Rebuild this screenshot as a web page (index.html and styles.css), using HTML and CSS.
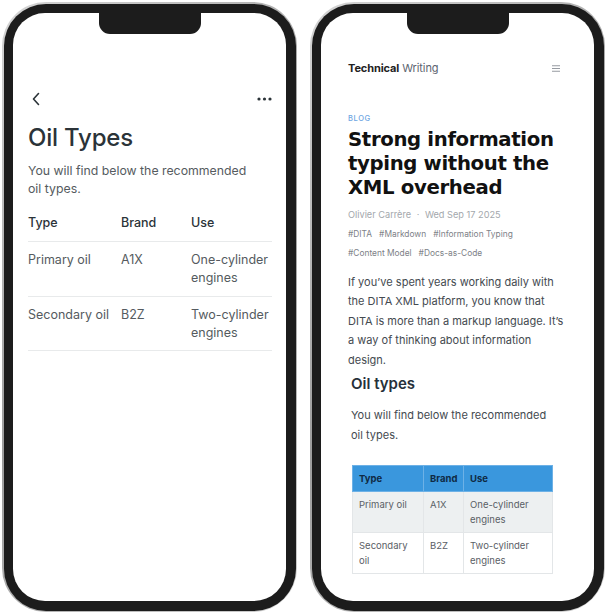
FILE: index.html
```html
<!DOCTYPE html>
<html lang="en">
<head>
<meta charset="utf-8">
<title>Oil Types</title>
<link rel="stylesheet" href="styles.css">
</head>
<body>
<div class="phone">
  <div class="frame">
    <div class="screen app">
      <div class="notch"></div>
      <div class="nav">
        <svg class="back" width="10" height="14" viewBox="0 0 10 14"><path d="M6.5 1.5 L1.5 7 L6.5 12.5" fill="none" stroke="#2b3338" stroke-width="1.6" stroke-linecap="round" stroke-linejoin="round"/></svg>
        <svg class="more" width="15" height="4" viewBox="0 0 15 4"><circle cx="2" cy="2" r="1.6" fill="#2b3338"/><circle cx="7.5" cy="2" r="1.6" fill="#2b3338"/><circle cx="13" cy="2" r="1.6" fill="#2b3338"/></svg>
      </div>
      <h1 class="app-title">Oil Types</h1>
      <p class="app-intro">You will find below the recommended oil types.</p>
      <table class="app-table">
        <thead>
          <tr><th class="c1">Type</th><th class="c2">Brand</th><th class="c3">Use</th></tr>
        </thead>
        <tbody>
          <tr><td>Primary oil</td><td>A1X</td><td>One-cylinder engines</td></tr>
          <tr><td>Secondary oil</td><td>B2Z</td><td>Two-cylinder engines</td></tr>
        </tbody>
      </table>
    </div>
  </div>
</div>
<div class="phone">
  <div class="frame">
    <div class="screen blog">
      <div class="notch"></div>
      <header class="site-head">
        <div class="brand"><strong>Technical</strong> Writing</div>
        <svg class="menu" width="8" height="7" viewBox="0 0 8 7"><path d="M0 0.75H8M0 3.5H8M0 6.25H8" stroke="#8a8f96" stroke-width="0.9"/></svg>
      </header>
      <div class="kicker">BLOG</div>
      <h1 class="post-title">Strong information typing without the XML overhead</h1>
      <div class="meta">Olivier Carrère <span class="dot">·</span> Wed Sep 17 2025</div>
      <div class="tags">
        <span>#DITA</span><span>#Markdown</span><span>#Information Typing</span><span>#Content Model</span><span>#Docs-as-Code</span>
      </div>
      <p class="lead">If you’ve spent years working daily with the DITA XML platform, you know that DITA is more than a markup language. It’s a way of thinking about information design.</p>
      <section class="topic">
        <h2>Oil types</h2>
        <p>You will find below the recommended oil types.</p>
        <table class="doc-table">
          <thead>
            <tr><th class="d1">Type</th><th class="d2">Brand</th><th class="d3">Use</th></tr>
          </thead>
          <tbody>
            <tr class="odd"><td>Primary oil</td><td>A1X</td><td>One-cylinder engines</td></tr>
            <tr><td>Secondary oil</td><td>B2Z</td><td>Two-cylinder engines</td></tr>
          </tbody>
        </table>
      </section>
    </div>
  </div>
</div>
</body>
</html>
```
FILE: styles.css
```css
* { box-sizing: border-box; }
html, body { margin: 0; padding: 0; background: #ffffff; }
body {
  display: flex;
  gap: 13px;
  padding: 2px;
  font-family: Inter, "Liberation Sans", sans-serif;
}
.phone {
  width: 295px;
  height: 610px;
  padding: 1.5px;
  border-radius: 44px;
  background: linear-gradient(135deg, #d6d6d6, #9d9d9d 50%, #cfcfcf);
}
.frame {
  height: 100%;
  padding: 9.5px;
  border-radius: 42px;
  background: #1c1c1c;
}
.screen {
  position: relative;
  height: 100%;
  border-radius: 32px;
  background: #ffffff;
  overflow: hidden;
}
.notch {
  position: absolute;
  top: 0;
  left: 50%;
  width: 102px;
  height: 21px;
  margin-left: -51px;
  background: #1c1c1c;
  border-radius: 0 0 11px 11px;
}

/* ---------- left: app screen ---------- */
.app { padding: 75px 14px 0 15px; color: #2b3338; }
.nav {
  height: 22px;
  display: flex;
  align-items: center;
  justify-content: space-between;
  padding: 0 0 0 4px;
}
.app-title {
  margin: 13px 0 0;
  font-size: 24px;
  line-height: 30px;
  font-weight: 500;
  color: #2b3338;
  letter-spacing: -0.2px;
}
.app-intro {
  margin: 9px 0 0;
  width: 222px;
  font-size: 12.3px;
  line-height: 17.5px;
  color: #555b60;
}
.app-table {
  width: 100%;
  margin-top: 8px;
  border-collapse: collapse;
  font-size: 12.5px;
  line-height: 18px;
}
.app-table th, .app-table td {
  text-align: left;
  vertical-align: top;
  padding: 9px 0 9px;
  border-bottom: 1px solid #e8eaeb;
}
.app-table td { padding-bottom: 8.5px; }
.app-table th { font-weight: 500; color: #2b3338; }
.app-table td { color: #555b60; }
.app-table .c1 { width: 93px; }
.app-table .c2 { width: 70px; }

/* ---------- right: blog screen ---------- */
.blog { padding: 47px 28px 0 27px; color: #444; }
.site-head {
  display: flex;
  align-items: center;
  justify-content: space-between;
  height: 16px;
  padding-right: 6px;
}
.brand { font-size: 11px; color: #5c6470; letter-spacing: -0.1px; }
.brand strong { color: #222; font-weight: 700; }
.kicker {
  margin-top: 38px;
  font-size: 7.5px;
  letter-spacing: 0.6px;
  color: #6ea5e2;
  font-weight: 500;
  line-height: 10px;
}
.post-title {
  margin: 4px 0 0;
  font-family: "DejaVu Sans", Inter, sans-serif;
  font-size: 19.7px;
  line-height: 24px;
  font-weight: 700;
  color: #111;
  letter-spacing: -0.35px;
}
.meta {
  margin-top: 8px;
  font-size: 9.2px;
  line-height: 14px;
  color: #a3a7ac;
}
.dot { margin: 0 3px; }
.tags {
  margin-top: 3px;
  display: flex;
  flex-wrap: wrap;
  column-gap: 7px;
  font-size: 8.4px;
  line-height: 19px;
  color: #7d8187;
  width: 180px;
}
.lead {
  margin: 10px 0 0;
  font-size: 11px;
  line-height: 19.4px;
  color: #444a50;
}
.topic { padding-left: 3px; }
.topic h2 {
  margin: 3px 0 0;
  font-size: 15px;
  line-height: 22px;
  font-weight: 600;
  color: #26303a;
}
.topic p {
  margin: 10px 0 0;
  max-width: 205px;
  font-size: 11px;
  line-height: 20px;
  color: #444a50;
}
.doc-table {
  width: 201px;
  margin: 20px 0 0 1px;
  border-collapse: collapse;
  font-size: 9.5px;
  line-height: 15px;
}
.doc-table th, .doc-table td {
  text-align: left;
  vertical-align: top;
  padding: 5px 5px 5px 6px;
  border: 1px solid #e3e6e8;
}
.doc-table th {
  background: #3a97dd;
  color: #0f2a44;
  font-weight: 700;
  border-color: #6db1e6;
  padding-top: 5px;
  padding-bottom: 5px;
}
.doc-table td { color: #5a6066; height: 41px; }
.doc-table .odd td { background: #edf0f1; }
.doc-table .d1 { width: 71px; }
.doc-table .d2 { width: 40px; }
```
